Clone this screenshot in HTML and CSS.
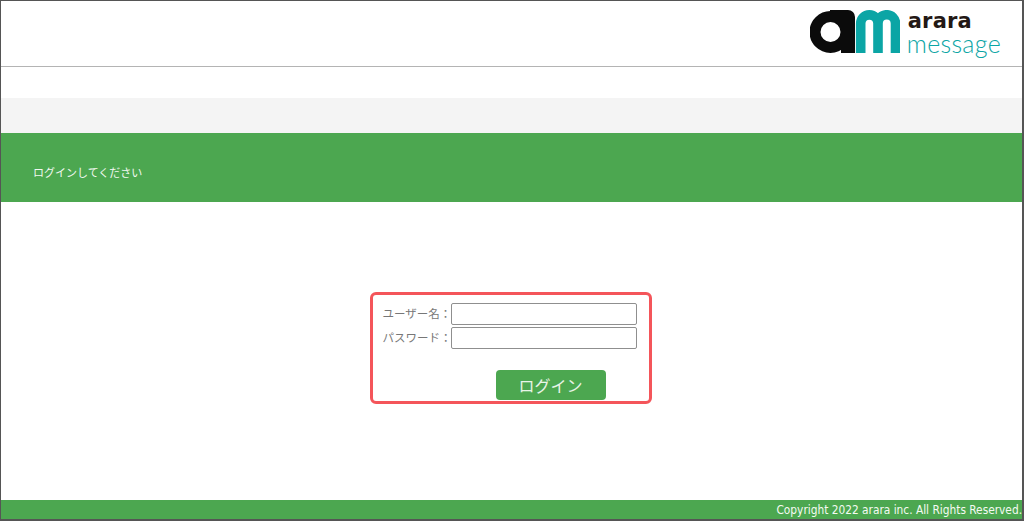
FILE: index.html
```html
<!DOCTYPE html>
<html lang="ja">
<head>
<meta charset="utf-8">
<title>arara message</title>
<link rel="stylesheet" href="styles.css">
</head>
<body>
<div class="frame">
  <header class="header">
    <div class="logo">
      <svg class="logo-mark" viewBox="0 0 90 43" width="90" height="43" aria-hidden="true">
        <circle cx="20.5" cy="22" r="15.5" fill="none" stroke="#0b0b0b" stroke-width="11"/>
        <path d="M20 0H38a7 7 0 0 1 7 7V43H31V12H20Z" fill="#0b0b0b"/>
        <path d="M50.7 43V13.5A8.65 8.65 0 0 1 68 13.5V43M68 13.5A8.75 8.75 0 0 1 85.5 13.5V43" fill="none" stroke="#0ba5a5" stroke-width="9.6"/>
      </svg>
      <div class="logo-text">
        <span class="logo-top">arara</span>
        <span class="logo-bottom">message</span>
      </div>
    </div>
  </header>
  <div class="spacer"></div>
  <div class="subbar"></div>
  <div class="banner">ログインしてください</div>
  <main class="main">
    <form class="login">
      <div class="row"><label class="label" for="u">ユーザー名：</label><input class="input" id="u" type="text"></div>
      <div class="row"><label class="label" for="p">パスワード：</label><input class="input" id="p" type="password"></div>
      <div class="actions"><button class="button" type="button">ログイン</button></div>
    </form>
  </main>
  <footer class="footer">Copyright 2022 arara inc. All Rights Reserved.</footer>
</div>
</body>
</html>
```
FILE: styles.css
```css
* { box-sizing: border-box; }
html, body { margin: 0; height: 100%; }
body { font-family: "DejaVu Sans", "Noto Sans CJK JP", sans-serif; background: #fff; overflow: hidden; }
.frame { height: 521px; border: 1px solid #555; border-right-width: 2px; border-bottom-width: 2px; display: flex; flex-direction: column; background: #fff; }
.header { height: 66px; border-bottom: 1px solid #b4b4b4; display: flex; justify-content: flex-end; align-items: flex-start; padding: 9px 21px 0 0; }
.logo { display: flex; gap: 7px; }
.logo-mark { display: block; }
.logo-text { display: flex; flex-direction: column; padding-top: 2px; }
.logo-top { font-family: "DejaVu Sans", sans-serif; font-size: 21px; font-weight: 700; line-height: 19px; height: 19px; padding-left: 1px; letter-spacing: .2px; color: #231815; }
.logo-bottom { font-family: "Lato", sans-serif; font-size: 25px; font-weight: 300; line-height: 24px; letter-spacing: .3px; color: #0ba5a5; white-space: nowrap; }
.spacer { height: 31px; }
.subbar { height: 35px; background: #f4f4f4; }
.banner { height: 69px; background: #4ca750; color: #f2f8f0; font: 11px/79px "Noto Sans CJK JP", sans-serif; padding-left: 32px; }
.main { flex: 1; display: flex; justify-content: center; align-items: flex-start; padding: 90px 2px 0 0; }
.login { width: 282px; height: 112px; border: 3px solid #f4555a; border-radius: 6px; padding: 7px 11px 0 10px; }
.row { display: flex; align-items: center; height: 24px; }
.label { width: 68px; margin-bottom: 2px; font: 11.5px "Noto Sans CJK JP", sans-serif; color: #777; white-space: nowrap; }
.input { width: 186px; height: 22px; border: 1px solid #8f8f8f; border-radius: 2px; background: #fff; padding: 0 4px; }
.actions { display: flex; justify-content: flex-end; padding: 20px 32px 0 0; }
.button { width: 110px; height: 30px; background: #4ca750; color: #e8f4e8; border: 0; border-radius: 4px; font: 16px "Noto Sans CJK JP", sans-serif; padding: 0; }
.footer { height: 19px; background: #4ca750; color: #f4faf2; font-family: "DejaVu Sans Condensed", "DejaVu Sans", sans-serif; font-stretch: condensed; font-size: 11.8px; line-height: 20px; text-align: right; white-space: nowrap; }
```
